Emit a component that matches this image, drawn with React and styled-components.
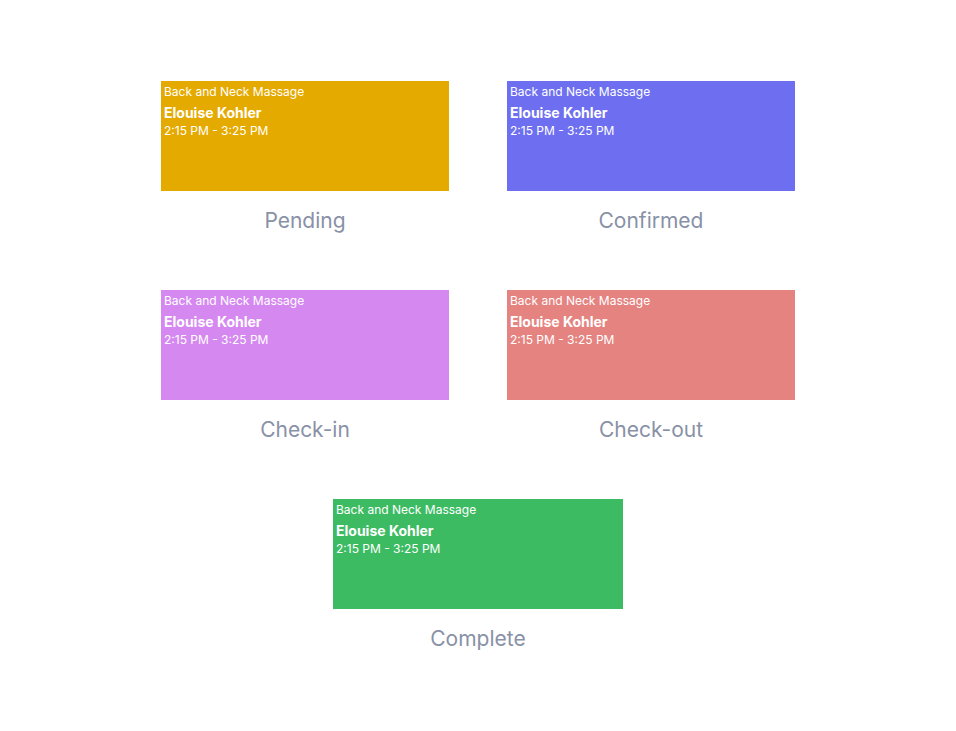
import styled, { createGlobalStyle } from 'styled-components';

const GlobalStyle = createGlobalStyle`
  html, body {
    margin: 0;
    padding: 0;
    background: #ffffff;
    font-family: Inter, "Noto Sans", sans-serif;
  }
`;

const Page = styled.div`
  width: 956px;
  min-height: 731px;
  display: flex;
  justify-content: center;
  align-items: flex-start;
  padding-top: 81px;
  box-sizing: border-box;
`;

const Grid = styled.div`
  display: grid;
  grid-template-columns: 288px 288px;
  column-gap: 58px;
  row-gap: 55px;
  justify-items: center;
`;

const Item = styled.div`
  display: flex;
  flex-direction: column;
  align-items: center;
  grid-column: ${({ $span }) => ($span ? '1 / span 2' : 'auto')};
`;

const Card = styled.div`
  width: ${({ $wide }) => ($wide ? '290px' : '288px')};
  height: 110px;
  box-sizing: border-box;
  padding: 3px 3px;
  background: ${({ $color }) => $color};
  color: #ffffff;
  display: flex;
  flex-direction: column;
`;

const Service = styled.div`
  font-size: 12px;
  line-height: 16px;
`;

const Client = styled.div`
  font-size: 14px;
  font-weight: 700;
  line-height: 20px;
  margin-top: 3px;
`;

const Time = styled.div`
  font-size: 12px;
  line-height: 16px;
`;

const Label = styled.div`
  margin-top: 16px;
  font-size: 21px;
  line-height: 28px;
  color: #8891a6;
`;

const statuses = [
  { label: 'Pending', color: '#e5aa00' },
  { label: 'Confirmed', color: '#6e6ff0' },
  { label: 'Check-in', color: '#d589f0' },
  { label: 'Check-out', color: '#e58380' },
  { label: 'Complete', color: '#3cbb63', span: true },
];

export default function App() {
  return (
    <>
      <GlobalStyle />
      <Page>
        <Grid>
          {statuses.map((s) => (
            <Item key={s.label} $span={s.span}>
              <Card $color={s.color} $wide={s.span}>
                <Service>Back and Neck Massage</Service>
                <Client>Elouise Kohler</Client>
                <Time>2:15 PM - 3:25 PM</Time>
              </Card>
              <Label>{s.label}</Label>
            </Item>
          ))}
        </Grid>
      </Page>
    </>
  );
}
